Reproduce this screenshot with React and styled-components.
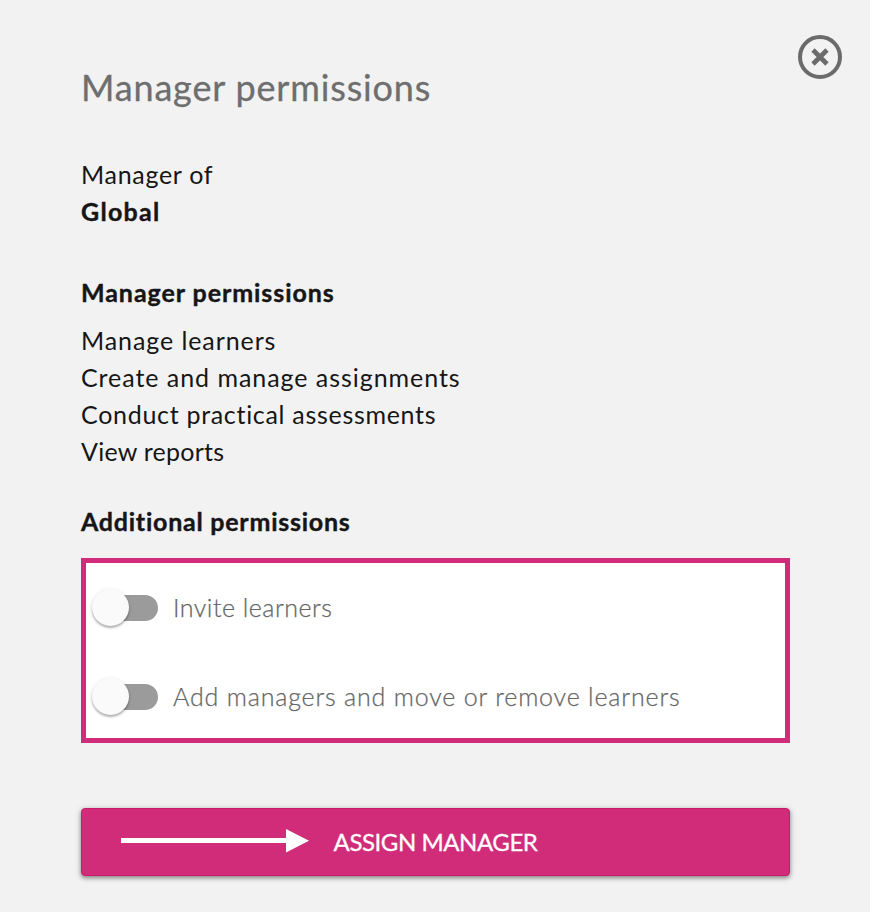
import React from 'react'
import styled, { createGlobalStyle } from 'styled-components'

const GlobalStyle = createGlobalStyle`
  * {
    box-sizing: border-box;
  }

  body {
    margin: 0;
    background: #f2f2f2;
    color: #161616;
    font-family: Lato, 'Liberation Sans', sans-serif;
    font-size: 25px;
    line-height: 37px;
  }
`

const Panel = styled.main`
  width: 870px;
  height: 912px;
  padding: 35px 28px 0 81px;
  overflow: hidden;
`

const Header = styled.header`
  display: flex;
  align-items: flex-start;
  justify-content: space-between;
`

const Title = styled.h1`
  margin: 28px 0 0;
  color: #6e6e6e;
  font-size: 36px;
  font-weight: 400;
  line-height: 48px;
  letter-spacing: 0.84px;
  white-space: nowrap;
  -webkit-text-stroke: 0.3px;
`

const CloseButton = styled.button`
  display: flex;
  width: 44px;
  height: 44px;
  padding: 0;
  border: 0;
  background: none;
`

const Content = styled.div`
  margin-right: 52px;
`

const Section = styled.section`
  margin-top: ${props => props.$top}px;
`

const Heading = styled.h2`
  margin: 0 0 ${props => props.$bottom}px;
  font-size: 25px;
  font-weight: 700;
  letter-spacing: ${props => props.$spacing}px;
  -webkit-text-stroke: 0.4px;
`

const Line = styled.div`
  width: max-content;
  font-weight: ${props => (props.$bold ? 700 : 400)};
  letter-spacing: ${props => props.$spacing}px;
  -webkit-text-stroke: ${props => (props.$bold ? '0.4px' : '0')};
`

const Options = styled.div`
  display: flex;
  flex-direction: column;
  gap: 52px;
  height: 185px;
  padding: 26px 5px 0;
  border: 5px solid #d12c7a;
  background: #fff;
`

const Option = styled.label`
  display: flex;
  align-items: center;
  gap: 15px;
  height: 37px;
`

const Track = styled.span`
  display: flex;
  align-items: center;
  width: 62px;
  height: 26px;
  margin-left: 5px;
  border-radius: 13px;
  background: #9b9b9b;
`

const Knob = styled.span`
  flex: none;
  width: 37px;
  height: 37px;
  margin-left: -4px;
  border-radius: 50%;
  background: #fafafa;
  box-shadow: 0 2px 2px rgba(0, 0, 0, 0.25), 0 1px 4px rgba(0, 0, 0, 0.12);
`

const OptionText = styled.span`
  padding-bottom: 1px;
  color: #666;
  font-weight: 300;
  letter-spacing: ${props => props.$spacing}px;
  white-space: nowrap;
  -webkit-text-stroke: 0.25px;
`

const AssignButton = styled.button`
  position: relative;
  display: flex;
  align-items: center;
  justify-content: center;
  width: 100%;
  height: 68px;
  margin-top: 65px;
  padding: 0 0 1px;
  border: 1px solid #c91a6c;
  border-radius: 4px;
  background: #d12c7a;
  box-shadow: 0 2px 4px rgba(0, 0, 0, 0.4), 0 1px 8px rgba(0, 0, 0, 0.12);
  color: #fff;
  font-family: inherit;
  font-size: 24px;
  letter-spacing: -0.45px;
  -webkit-text-stroke: 0.3px;
`

const Arrow = styled.svg`
  position: absolute;
  top: 20px;
  left: 38px;
`

const permissions = [
  { text: 'Manage learners', spacing: 0.91 },
  { text: 'Create and manage assignments', spacing: 0.95 },
  { text: 'Conduct practical assessments', spacing: 0.7 },
  { text: 'View reports', spacing: 0.25 }
]

const options = [
  { text: 'Invite learners', spacing: 0.5 },
  { text: 'Add managers and move or remove learners', spacing: 0.83 }
]

function App() {
  return (
    <Panel>
      <GlobalStyle />
      <Header>
        <Title>Manager permissions</Title>
        <CloseButton aria-label="Close">
          <svg width="44" height="44" viewBox="0 0 44 44" fill="none" stroke="#6b6b6b">
            <circle cx="22" cy="22" r="20" strokeWidth="4" />
            <path d="M15 15l14 14M29 15L15 29" strokeWidth="4.6" />
          </svg>
        </CloseButton>
      </Header>
      <Content>
        <Section $top={45}>
          <Line $spacing={0.7}>Manager of</Line>
          <Line $bold $spacing={1.3}>Global</Line>
        </Section>
        <Section $top={44}>
          <Heading $bottom={11} $spacing={0.94}>Manager permissions</Heading>
          {permissions.map(item => (
            <Line key={item.text} $spacing={item.spacing}>{item.text}</Line>
          ))}
        </Section>
        <Section $top={33}>
          <Heading $bottom={18} $spacing={0.76}>Additional permissions</Heading>
          <Options>
            {options.map(item => (
              <Option key={item.text}>
                <Track>
                  <Knob />
                </Track>
                <OptionText $spacing={item.spacing}>{item.text}</OptionText>
              </Option>
            ))}
          </Options>
        </Section>
        <AssignButton>
          <Arrow width="190" height="24" viewBox="0 0 190 24" fill="#fff">
            <path d="M1 9h165V0l23 11.700L166 23.500V14H1z" />
          </Arrow>
          ASSIGN MANAGER
        </AssignButton>
      </Content>
    </Panel>
  )
}

export default App
